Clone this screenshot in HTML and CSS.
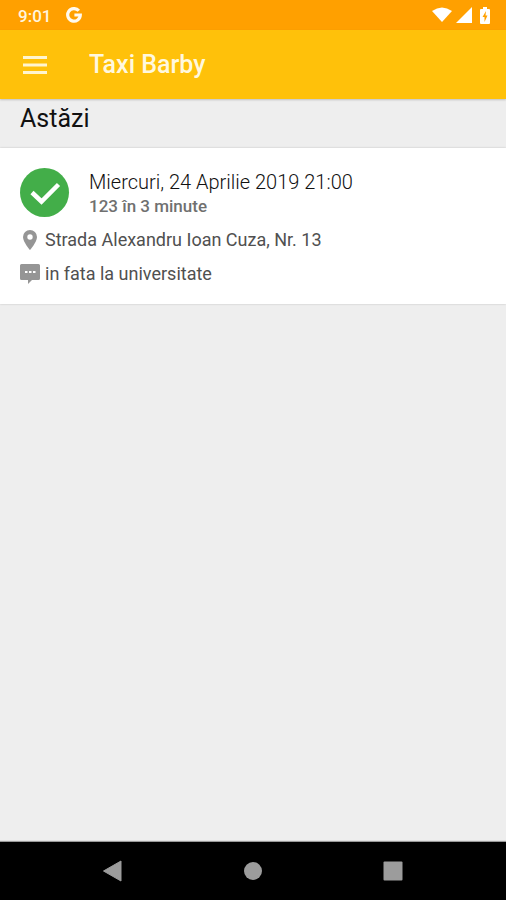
FILE: index.html
```html
<!DOCTYPE html>
<html lang="ro">
<head>
<meta charset="utf-8">
<meta name="viewport" content="width=device-width, initial-scale=1">
<title>Taxi Barby</title>
<link rel="stylesheet" href="styles.css">
</head>
<body>
<div class="status-bar">
  <time class="clock">9:01</time>
  <svg class="google" viewBox="0 0 16 16" width="16" height="16" aria-hidden="true"><path d="M12.800 3.800A6.300 6.300 0 1 0 14.300 8H8.400" fill="none" stroke="#fffaf0" stroke-width="3.200"/></svg>
  <div class="indicators">
    <svg viewBox="0 0 20 16" width="20" height="16" aria-hidden="true"><path d="M0 4Q10-3 20 4L10 15Z" fill="#fff"/></svg>
    <svg viewBox="0 0 16 16" width="16" height="16" aria-hidden="true"><path d="M16 0V16H0Z" fill="#fff"/></svg>
    <svg viewBox="0 0 10 17" width="10" height="17" aria-hidden="true"><path d="M3 0H7V2H9Q10 2 10 3V16Q10 17 9 17H1Q0 17 0 16V3Q0 2 1 2H3Z" fill="#fff"/><path d="M6 4L2.500 10H4.500V15L7.500 8.500H5.500Z" fill="#ffa000"/></svg>
  </div>
</div>
<header class="app-bar">
  <button class="menu" aria-label="Meniu"><svg viewBox="0 0 24 18" width="24" height="18"><path d="M0 1.500H24M0 9H24M0 16.500H24" stroke="#fff5cf" stroke-width="3"/></svg></button>
  <h1 class="title">Taxi Barby</h1>
</header>
<main class="content">
  <h2 class="section">Astăzi</h2>
  <article class="trip">
    <div class="summary">
      <svg viewBox="0 0 50 50" width="50" height="50" aria-hidden="true"><circle cx="24.500" cy="24.500" r="24.500" fill="#43ae49"/><path d="M12 24.500L21.500 33.500L38.500 16.500" fill="none" stroke="#fff" stroke-width="4.500"/></svg>
      <div class="details">
        <h3 class="date">Miercuri, 24 Aprilie 2019 21:00</h3>
        <p class="eta">123 în 3 minute</p>
      </div>
    </div>
    <p class="line">
      <svg viewBox="0 0 20 20" width="20" height="20" aria-hidden="true"><path fill-rule="evenodd" d="M10 0A7 7 0 0 0 3 7C3 12 10 20 10 20S17 12 17 7A7 7 0 0 0 10 0ZM10 4.300A2.700 2.700 0 1 1 10 9.700A2.700 2.700 0 1 1 10 4.300Z" fill="#959595"/></svg>
      <span>Strada Alexandru Ioan Cuza, Nr. 13</span>
    </p>
    <p class="line">
      <svg viewBox="0 0 20 20" width="20" height="20" aria-hidden="true"><path d="M1.500 0H18.500Q20 0 20 1.500V14.500Q20 16 18.500 16H12L8 20V16H1.500Q0 16 0 14.500V1.500Q0 0 1.500 0Z" fill="#959595"/><path d="M5 7H7.500V9H5ZM9 7H11.500V9H9ZM13 7H15.500V9H13Z" fill="#fff"/></svg>
      <span>in fata la universitate</span>
    </p>
  </article>
</main>
<nav class="system-nav">
  <button aria-label="Înapoi"><svg viewBox="0 0 20 22" width="20" height="22"><path d="M18 1V21L0.500 11Z" fill="#9c9c9c" stroke="#9c9c9c" stroke-linejoin="round"/></svg></button>
  <button aria-label="Acasă"><svg viewBox="0 0 20 20" width="20" height="20"><circle cx="10" cy="10" r="9" fill="#9c9c9c"/></svg></button>
  <button aria-label="Recente"><svg viewBox="0 0 20 20" width="20" height="20"><rect x=".5" y=".5" width="19" height="19" rx="1" fill="#9c9c9c"/></svg></button>
</nav>
</body>
</html>
```
FILE: styles.css
```css
* {
  box-sizing: border-box;
}

body {
  margin: 0;
  min-height: 100vh;
  display: flex;
  flex-direction: column;
  background: #eee;
  font-family: Roboto, sans-serif;
}

h1, h2, h3, p {
  margin: 0;
}

svg {
  display: block;
  flex: none;
}

button {
  padding: 0;
  border: 0;
  background: none;
}

.status-bar {
  height: 30px;
  padding: 0 16px 0 18px;
  display: flex;
  align-items: center;
  gap: 15px;
  background: #ffa000;
  color: #fff5df;
}

.clock {
  padding-top: 2px;
  font-size: 17px;
  line-height: 30px;
  font-weight: 500;
}

.indicators {
  margin-left: auto;
  display: flex;
  align-items: center;
  gap: 4px;
}

.indicators svg:last-child {
  margin-left: 4px;
}

.app-bar {
  position: relative;
  height: 69px;
  padding: 0 23px;
  display: flex;
  align-items: center;
  gap: 42px;
  background: #ffc10a;
  box-shadow: 0 1px 2px rgba(0, 0, 0, .2);
}

.title {
  font-size: 25px;
  line-height: 32px;
  font-weight: 500;
  color: #fff8df;
}

.content {
  flex: 1;
}

.section {
  padding: 4px 20px 13px;
  font-size: 25px;
  line-height: 32px;
  font-weight: 400;
  color: #111;
}

.trip {
  padding: 20px 20px 18px;
  display: flex;
  flex-direction: column;
  gap: 10px;
  background: #fff;
  box-shadow: 0 0 2px rgba(0, 0, 0, .2);
}

.summary {
  display: flex;
  align-items: center;
  gap: 19px;
}

.details {
  padding-top: 2px;
}

.date {
  font-size: 20px;
  line-height: 24px;
  font-weight: 300;
  color: #111;
}

.eta {
  font-size: 17px;
  line-height: 24px;
  font-weight: 500;
  color: #707070;
}

.line {
  display: flex;
  align-items: center;
  gap: 5px;
  font-size: 18px;
  line-height: 24px;
  color: #505050;
}

.system-nav {
  height: 58px;
  display: flex;
  align-items: center;
  justify-content: center;
  gap: 120px;
  background: #000;
  box-shadow: 0 -1px 1px #999;
}
```
